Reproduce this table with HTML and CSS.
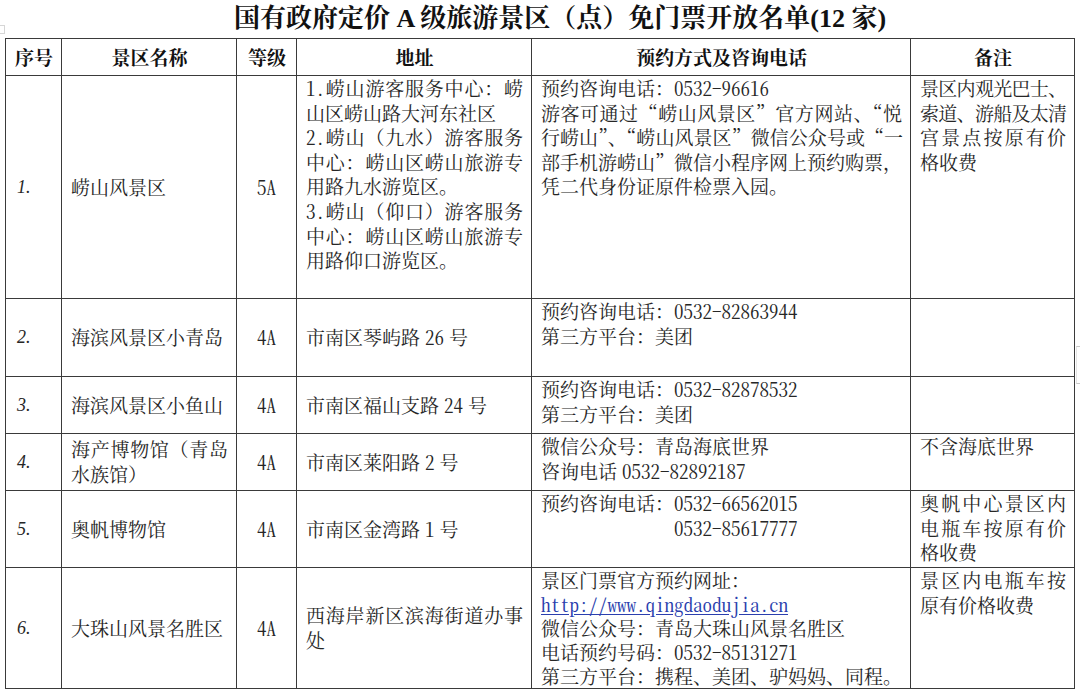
FILE: index.html
```html
<!DOCTYPE html>
<html lang="zh-CN">
<head>
<meta charset="utf-8">
<title>免门票开放名单</title>
<link rel="stylesheet" href="styles.css">
</head>
<body>
<div class="page">
  <span class="handle-tl"></span>
  <span class="handle-r"></span>
  <h1 class="title">国有政府定价 A 级旅游景区（点）免门票开放名单(12 家)</h1>
  <table class="list">
    <colgroup>
      <col class="c-no"><col class="c-name"><col class="c-grade"><col class="c-addr"><col class="c-contact"><col class="c-note">
    </colgroup>
    <thead>
      <tr class="rh">
        <th>序号</th><th>景区名称</th><th>等级</th><th>地址</th><th>预约方式及咨询电话</th><th>备注</th>
      </tr>
    </thead>
    <tbody>
      <tr class="r1">
        <td class="no">1.</td>
        <td class="name">崂山风景区</td>
        <td class="grade"><span class="h">5A</span></td>
        <td class="addr top">
          <div class="ln j"><span class="h">1.</span>崂山游客服务中心：崂</div>
          <div class="ln">山区崂山路大河东社区</div>
          <div class="ln j"><span class="h">2.</span>崂山（九水）游客服务</div>
          <div class="ln j">中心：崂山区崂山旅游专</div>
          <div class="ln">用路九水游览区。</div>
          <div class="ln j"><span class="h">3.</span>崂山（仰口）游客服务</div>
          <div class="ln j">中心：崂山区崂山旅游专</div>
          <div class="ln">用路仰口游览区。</div>
        </td>
        <td class="contact">
          <div class="ln">预约咨询电话：<span class="h">0532-96616</span></div>
          <div class="ln j">游客可通过“崂山风景区”官方网站、“悦</div>
          <div class="ln j tight">行崂山”、“崂山风景区”微信公众号或“一</div>
          <div class="ln j">部手机游崂山”微信小程序网上预约购票，</div>
          <div class="ln">凭二代身份证原件检票入园。</div>
        </td>
        <td class="note">
          <div class="ln j tight">景区内观光巴士、</div>
          <div class="ln j tight">索道、游船及太清</div>
          <div class="ln j">宫景点按原有价</div>
          <div class="ln">格收费</div>
        </td>
      </tr>
      <tr class="r2">
        <td class="no">2.</td>
        <td class="name">海滨风景区小青岛</td>
        <td class="grade"><span class="h">4A</span></td>
        <td class="addr">市南区琴屿路<span class="h d">26</span>号</td>
        <td class="contact">
          <div class="ln">预约咨询电话：<span class="h">0532-82863944</span></div>
          <div class="ln">第三方平台：美团</div>
        </td>
        <td class="note"></td>
      </tr>
      <tr class="r3">
        <td class="no">3.</td>
        <td class="name">海滨风景区小鱼山</td>
        <td class="grade"><span class="h">4A</span></td>
        <td class="addr">市南区福山支路<span class="h d">24</span>号</td>
        <td class="contact">
          <div class="ln">预约咨询电话：<span class="h">0532-82878532</span></div>
          <div class="ln">第三方平台：美团</div>
        </td>
        <td class="note"></td>
      </tr>
      <tr class="r4">
        <td class="no">4.</td>
        <td class="name">
          <div class="ln j">海产博物馆（青岛</div>
          <div class="ln">水族馆）</div>
        </td>
        <td class="grade"><span class="h">4A</span></td>
        <td class="addr">市南区莱阳路<span class="h d">2</span>号</td>
        <td class="contact">
          <div class="ln">微信公众号：青岛海底世界</div>
          <div class="ln">咨询电话<span class="h d dl">0532-82892187</span></div>
        </td>
        <td class="note">
          <div class="ln">不含海底世界</div>
        </td>
      </tr>
      <tr class="r5">
        <td class="no">5.</td>
        <td class="name">奥帆博物馆</td>
        <td class="grade"><span class="h">4A</span></td>
        <td class="addr">市南区金湾路<span class="h d">1</span>号</td>
        <td class="contact">
          <div class="ln">预约咨询电话：<span class="h">0532-66562015</span></div>
          <div class="ln indent"><span class="h">0532-85617777</span></div>
        </td>
        <td class="note">
          <div class="ln j">奥帆中心景区内</div>
          <div class="ln j">电瓶车按原有价</div>
          <div class="ln">格收费</div>
        </td>
      </tr>
      <tr class="r6">
        <td class="no">6.</td>
        <td class="name">大珠山风景名胜区</td>
        <td class="grade"><span class="h">4A</span></td>
        <td class="addr">
          <div class="ln j">西海岸新区滨海街道办事</div>
          <div class="ln">处</div>
        </td>
        <td class="contact">
          <div class="ln">景区门票官方预约网址：</div>
          <div class="ln"><a class="link h" href="#">http://www.qingdaodujia.cn</a></div>
          <div class="ln">微信公众号：青岛大珠山风景名胜区</div>
          <div class="ln">电话预约号码：<span class="h">0532-85131271</span></div>
          <div class="ln">第三方平台：携程、美团、驴妈妈、同程。</div>
        </td>
        <td class="note">
          <div class="ln j">景区内电瓶车按</div>
          <div class="ln">原有价格收费</div>
        </td>
      </tr>
    </tbody>
  </table>
</div>
</body>
</html>
```
FILE: styles.css
```css
html, body {
  margin: 0;
  padding: 0;
  background: #ffffff;
}

body {
  font-family: "Noto Serif CJK SC", "Noto Sans CJK SC", "Liberation Serif", serif;
  font-size: 19px;
  color: #262626;
}

.page {
  position: relative;
  width: 1080px;
  height: 692px;
  overflow: hidden;
}

.title {
  margin: 0;
  height: 38px;
  padding-left: 40px;
  box-sizing: border-box;
  text-align: center;
  font-family: "Liberation Serif", "Noto Serif CJK SC", "Noto Sans CJK SC", serif;
  font-size: 26px;
  font-weight: 700;
  line-height: 37px;
  color: #111111;
}

.list {
  border-collapse: collapse;
  table-layout: fixed;
  width: 1069px;
  margin-left: 5px;
}

.c-no { width: 56px; }
.c-name { width: 175px; }
.c-grade { width: 60px; }
.c-addr { width: 235px; }
.c-contact { width: 379px; }
.c-note { width: 164px; }

.list th,
.list td {
  border: 1px solid #3a3a3a;
  padding: 0 8px 0 9px;
  line-height: 24.6px;
  vertical-align: middle;
  text-align: left;
  font-weight: 400;
}

.list th {
  text-align: center;
  font-weight: 700;
  color: #111111;
}

.rh th { height: 36px; }
.r1 td { height: 222px; }
.r2 td { height: 77px; }
.r3 td { height: 56px; }
.r4 td { height: 56px; }
.r5 td { height: 76px; }
.r6 td { height: 119px; }

.r6 td.contact {
  line-height: 24px;
}

.list td.no {
  padding-left: 11px;
  font-family: "Liberation Serif", serif;
  font-style: italic;
  font-size: 18px;
}

.list td.grade {
  text-align: center;
  padding: 0;
}

.list td.contact,
.list td.note,
.list td.top {
  vertical-align: top;
  padding-top: 0;
}

.h {
  font-feature-settings: "hwid";
}

.ln {
  white-space: nowrap;
}

.j {
  text-align: justify;
  text-align-last: justify;
}

.tight {
  letter-spacing: -1.1px;
}

.d {
  margin: 0 5px;
}

.d.dl {
  margin-right: 0;
}

.indent {
  padding-left: 133px;
}

.link {
  color: #2b3fae;
  text-decoration: underline;
  text-underline-offset: 2px;
}

.handle-tl {
  position: absolute;
  left: 0;
  top: 25px;
  width: 4px;
  height: 7px;
  border: 1px solid #d6d6d6;
  border-left: none;
}

.handle-r {
  position: absolute;
  left: 1076px;
  top: 346px;
  width: 4px;
  height: 36px;
  border-top: 1px solid #c8c8c8;
  border-bottom: 1px solid #c8c8c8;
  border-left: 1px solid #e4e4e4;
}
```
